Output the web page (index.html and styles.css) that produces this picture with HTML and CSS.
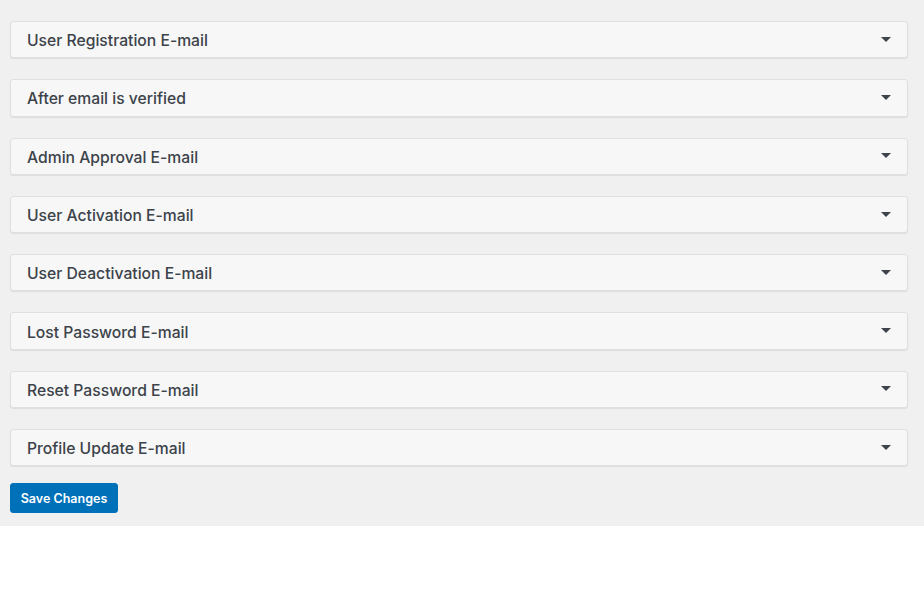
FILE: index.html
```html
<!DOCTYPE html>
<html>
<head>
<meta charset="utf-8">
<link rel="stylesheet" href="styles.css">
</head>
<body>
<div class="wrap">
  <div class="panels">
    <div class="panel"><span class="title">User Registration E-mail</span><span class="arrow"></span></div>
    <div class="panel"><span class="title">After email is verified</span><span class="arrow"></span></div>
    <div class="panel"><span class="title">Admin Approval E-mail</span><span class="arrow"></span></div>
    <div class="panel"><span class="title">User Activation E-mail</span><span class="arrow"></span></div>
    <div class="panel"><span class="title">User Deactivation E-mail</span><span class="arrow"></span></div>
    <div class="panel"><span class="title">Lost Password E-mail</span><span class="arrow"></span></div>
    <div class="panel"><span class="title">Reset Password E-mail</span><span class="arrow"></span></div>
    <div class="panel"><span class="title">Profile Update E-mail</span><span class="arrow"></span></div>
  </div>
  <button class="save">Save Changes</button>
</div>
</body>
</html>
```

FILE: styles.css
```css
html, body {
  margin: 0;
  padding: 0;
  background: #ffffff;
}
.wrap {
  background: #f0f0f0;
  padding: 21px 16px 13px 10px;
  font-family: "Inter", "Liberation Sans", sans-serif;
}
.panels {
  display: flex;
  flex-direction: column;
  gap: 21px;
}
.panel {
  height: 37.3px;
  box-sizing: border-box;
  background: #f7f7f7;
  border: 1px solid #e0e0e0;
  border-radius: 3px;
  box-shadow: 0 1px 1px rgba(0,0,0,0.08);
  display: flex;
  align-items: center;
  justify-content: space-between;
  padding: 0 16px 0 16px;
}
.title {
  font-size: 15.7px;
  font-weight: 500;
  color: #3c434a;
  margin-top: 2px;
}
.arrow {
  width: 0;
  height: 0;
  border-left: 5px solid transparent;
  border-right: 5px solid transparent;
  border-top: 5px solid #3c434a;
  margin-top: -1px;
}
.save {
  margin-top: 17px;
  display: block;
  height: 30px;
  width: 108px;
  background: #0071b9;
  color: #ffffff;
  border: 1px solid #0071b9;
  border-radius: 3px;
  font-family: "Inter", "Liberation Sans", sans-serif;
  font-size: 12.5px;
  font-weight: 600;
  padding: 0;
}
```
